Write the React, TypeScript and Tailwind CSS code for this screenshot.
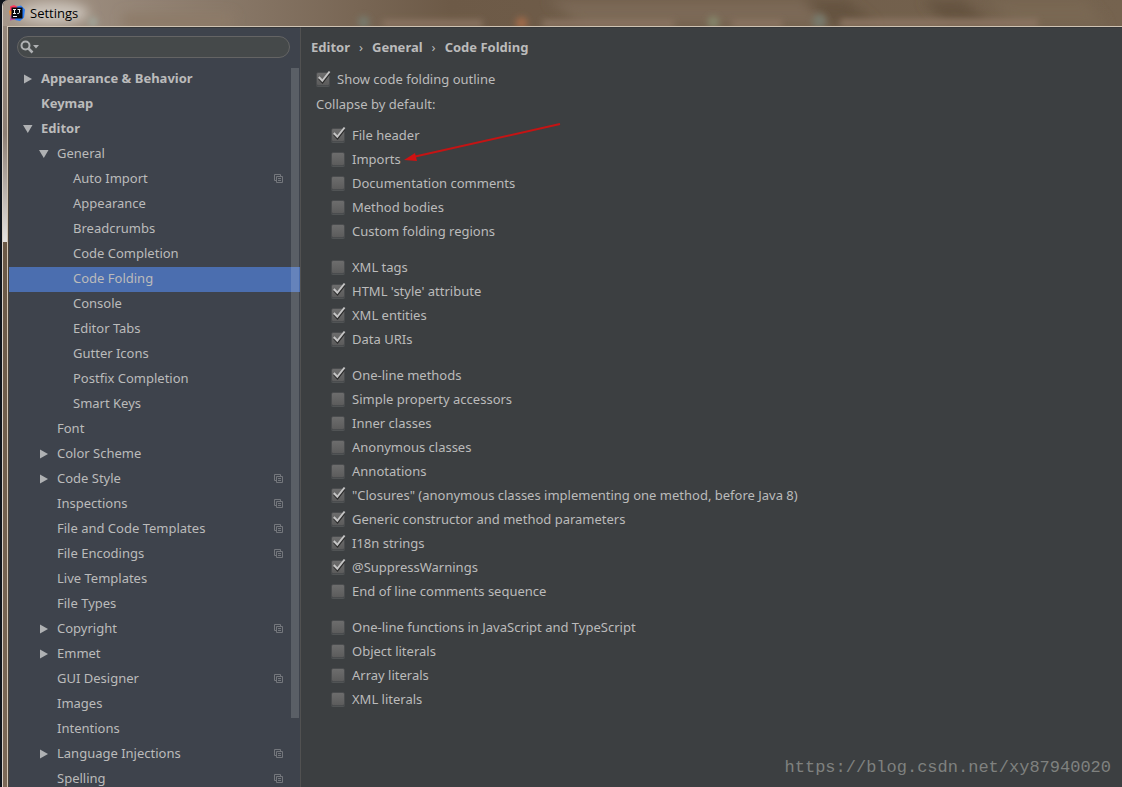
import { useId, useState } from "react";

type TreeItem = {
  label: string;
  depth: 0 | 1 | 2;
  arrow?: "right" | "down";
  bold?: boolean;
  copy?: boolean;
  selected?: boolean;
};

const tree: TreeItem[] = [
  { label: "Appearance & Behavior", depth: 0, arrow: "right", bold: true },
  { label: "Keymap", depth: 0, bold: true },
  { label: "Editor", depth: 0, arrow: "down", bold: true },
  { label: "General", depth: 1, arrow: "down" },
  { label: "Auto Import", depth: 2, copy: true },
  { label: "Appearance", depth: 2 },
  { label: "Breadcrumbs", depth: 2 },
  { label: "Code Completion", depth: 2 },
  { label: "Code Folding", depth: 2, selected: true },
  { label: "Console", depth: 2 },
  { label: "Editor Tabs", depth: 2 },
  { label: "Gutter Icons", depth: 2 },
  { label: "Postfix Completion", depth: 2 },
  { label: "Smart Keys", depth: 2 },
  { label: "Font", depth: 1 },
  { label: "Color Scheme", depth: 1, arrow: "right" },
  { label: "Code Style", depth: 1, arrow: "right", copy: true },
  { label: "Inspections", depth: 1, copy: true },
  { label: "File and Code Templates", depth: 1, copy: true },
  { label: "File Encodings", depth: 1, copy: true },
  { label: "Live Templates", depth: 1 },
  { label: "File Types", depth: 1 },
  { label: "Copyright", depth: 1, arrow: "right", copy: true },
  { label: "Emmet", depth: 1, arrow: "right" },
  { label: "GUI Designer", depth: 1, copy: true },
  { label: "Images", depth: 1 },
  { label: "Intentions", depth: 1 },
  { label: "Language Injections", depth: 1, arrow: "right", copy: true },
  { label: "Spelling", depth: 1, copy: true },
];

type Option = { label: string; checked?: boolean; marked?: boolean };

const groups: Option[][] = [
  [
    { label: "File header", checked: true },
    { label: "Imports", marked: true },
    { label: "Documentation comments" },
    { label: "Method bodies" },
    { label: "Custom folding regions" },
  ],
  [
    { label: "XML tags" },
    { label: "HTML 'style' attribute", checked: true },
    { label: "XML entities", checked: true },
    { label: "Data URIs", checked: true },
  ],
  [
    { label: "One-line methods", checked: true },
    { label: "Simple property accessors" },
    { label: "Inner classes" },
    { label: "Anonymous classes" },
    { label: "Annotations" },
    { label: '"Closures" (anonymous classes implementing one method, before Java 8)', checked: true },
    { label: "Generic constructor and method parameters", checked: true },
    { label: "I18n strings", checked: true },
    { label: "@SuppressWarnings", checked: true },
    { label: "End of line comments sequence" },
  ],
  [
    { label: "One-line functions in JavaScript and TypeScript" },
    { label: "Object literals" },
    { label: "Array literals" },
    { label: "XML literals" },
  ],
];

const depthPadding = ["pl-[14px]", "pl-[30px]", "pl-[46px]"];

function AppLogo() {
  return (
    <svg className="size-4 shrink-0" viewBox="0 0 16 16" aria-hidden="true">
      <path d="M1 1.5 5 0l4 2-3 7-5-1z" fill="#fb3a5e" />
      <path d="M0 5.500 3 6v4l-2 1z" fill="#f78a2a" />
      <path d="M8 1.500 12 .5l4 4-1 8-4 3.500-5-1z" fill="#2a7df5" />
      <path d="M1 15.500 2 9l6 3-2 2.500z" fill="#b3479c" />
      <rect x="2.500" y="2.500" width="11" height="11" fill="#07080c" />
      <path d="M4 4.500h3M5.500 4.500v4M4 8.500h3M8.500 4.500h3M10.500 4.500v3.200q0 .9-2.200 .8M4 11.500h4" fill="none" stroke="#f4f4f4" strokeWidth="1" />
    </svg>
  );
}

function Arrow({ dir }: { dir?: "right" | "down" }) {
  return (
    <svg className="size-[10px] shrink-0" viewBox="0 0 10 10" aria-hidden="true">
      {dir === "right" && <path d="M1 .5 9 5 1 9.500z" fill="#afb1b3" />}
      {dir === "down" && <path d="M0 1h9.500L4.800 9z" fill="#afb1b3" />}
    </svg>
  );
}

function CopyIcon() {
  return (
    <svg className="size-[9px] shrink-0" viewBox="0 0 9 9" fill="none" stroke="#74777c" aria-hidden="true">
      <path d="M2 6.500H.5V.5h6V2" />
      <path d="M2.500 2.500h6v6h-6zM4 4.500h3M4 6.500h3" />
    </svg>
  );
}

function Check({ option }: { option: Option }) {
  const id = useId();
  const [on, setOn] = useState(Boolean(option.checked));
  return (
    <div className="flex h-6 items-center gap-[7px]">
      <span className="relative size-[14px] shrink-0">
        <input
          id={id}
          type="checkbox"
          checked={on}
          onChange={(e) => setOn(e.target.checked)}
          className="block size-[14px] appearance-none rounded-[2px] border border-[#4a4c4e] bg-linear-to-b from-[#6d6d6d] to-[#5c5c5c] shadow-[0_1px_0_#515455]"
        />
        {on && (
          <svg className="pointer-events-none absolute -top-[2px] left-0 h-4 w-[15px]" viewBox="0 0 15 16" fill="none" aria-hidden="true">
            <path d="M3 8.500 6.500 12.500 13.500 3.500" stroke="#2b2b2b" strokeWidth="2" />
            <path d="M2.800 7 6.300 10.800 13.600 1.500" stroke="#c4c4c4" strokeWidth="2" />
          </svg>
        )}
      </span>
      <label htmlFor={id} className="relative whitespace-nowrap">
        {option.label}
        {option.marked && (
          <svg className="pointer-events-none absolute -top-[27px] left-full ml-[2px] h-10 w-40" viewBox="0 0 160 40" aria-hidden="true">
            <path d="M10 35 157 2" stroke="#c41414" strokeWidth="2" />
            <path d="M1 38 12 31 14 39z" fill="#d01212" />
          </svg>
        )}
      </label>
    </div>
  );
}

function TitleBar() {
  return (
    <header className="relative flex h-[26px] shrink-0 items-center gap-[5px] overflow-hidden bg-linear-to-r from-[#a5978a] via-[#6d5a47] via-40% to-[#75634f] pl-[6px]">
      <div className="absolute inset-0" aria-hidden="true">
        <svg className="h-full w-full" viewBox="0 0 1120 26" preserveAspectRatio="none">
          <defs>
            <filter id="haze" x="-30%" y="-100%" width="160%" height="300%">
              <feGaussianBlur stdDeviation="6" />
            </filter>
            <filter id="soft" x="-50%" y="-80%" width="200%" height="260%">
              <feGaussianBlur stdDeviation="3" />
            </filter>
          </defs>
          <g filter="url(#haze)">
            <path d="M545 0h255l55 26H580z" fill="#7b6957" />
            <path d="M800 0h45l30 26h-45zM920 0h40l30 26h-45z" fill="#655240" />
            <path d="M985 0h100l20 26h-90z" fill="#796753" />
            <path d="M120 14h110v14H120z" fill="#8d7a68" />
            <ellipse cx="50" cy="13" rx="36" ry="11" fill="#cbc3ba" />
          </g>
          <g filter="url(#soft)">
            <path d="M380 20h100v7H380zM540 20h132v7H540zM730 20h50v7h-50zM838 19h198v8H838z" fill="#8b7462" />
            <circle cx="361" cy="22" r="6" fill="#77796c" />
            <circle cx="519" cy="23" r="6" fill="#a06a48" />
            <circle cx="711" cy="22" r="6" fill="#84856b" />
            <circle cx="817" cy="21" r="7" fill="#77796c" />
            <circle cx="90" cy="22" r="5" fill="#a1a59a" />
          </g>
        </svg>
      </div>
      <span className="relative">
        <AppLogo />
      </span>
      <h1 className="relative font-['Open_Sans',sans-serif] text-[13px] text-black">Settings</h1>
    </header>
  );
}

export default function App() {
  return (
    <div className="flex h-screen overflow-hidden bg-[#10151c] pl-[2px] font-['Noto_Sans',sans-serif] text-[13px] leading-5 text-[#bbbbbb]">
      <div className="flex min-w-0 flex-1 flex-col overflow-hidden rounded-tl-[6px] border-l border-[#d9d0c7]">
        <TitleBar />
        <div className="flex min-h-0 flex-1 bg-[#6f5d4b]">
          <div className="flex w-1 shrink-0 flex-col" aria-hidden="true">
            <div className="h-[216px] bg-linear-to-b from-[#94867a] via-[#8d7f74] to-[#e4e2e0]" />
            <div className="flex-1 bg-linear-to-b from-[#6a5846] to-[#7b6856]" />
          </div>
          <div className="flex min-w-0 flex-1 border-t border-l border-[#d0c4b4]">
            <aside className="relative flex w-[293px] shrink-0 flex-col overflow-hidden border-t border-r border-l border-t-[#35373a] border-r-[#515151] border-l-[#4b4238] bg-[#3e434c]">
              <div className="px-2 pt-2">
                <div className="flex h-[22px] w-[273px] items-center gap-1 rounded-full border border-[#646464] bg-[#45494a] pr-3 pl-[2px]">
                  <svg className="h-[14px] w-5 shrink-0" viewBox="0 0 20 14" fill="none" aria-hidden="true">
                    <circle cx="5.500" cy="5.500" r="4" stroke="#afb1b3" strokeWidth="2" />
                    <path d="M8.500 8.500 12.500 12.500" stroke="#afb1b3" strokeWidth="2.500" />
                    <path d="M13 5h6l-3 3.500z" fill="#afb1b3" />
                  </svg>
                  <input type="search" aria-label="Search settings" className="min-w-0 flex-1 bg-transparent outline-none" />
                </div>
              </div>
              <nav className="mt-[9px] flex flex-col" aria-label="Settings categories">
                {tree.map((item) => (
                  <button
                    key={item.label}
                    type="button"
                    className={`flex h-[25px] shrink-0 items-center gap-2 pr-[17px] pb-[2px] text-left ${depthPadding[item.depth]} ${item.bold ? "font-bold" : ""} ${item.selected ? "bg-[#4b6eaf]" : ""}`}
                  >
                    <Arrow dir={item.arrow} />
                    <span className="flex-1 pb-[2px] whitespace-nowrap">{item.label}</span>
                    {item.copy && <CopyIcon />}
                  </button>
                ))}
              </nav>
              <div className="absolute top-10 right-[1px] h-[650px] w-2 bg-white/15" aria-hidden="true" />
            </aside>
            <main className="relative min-w-0 flex-1 border-t border-[#35373a] bg-[#3c3f41]">
              <nav className="flex items-center gap-[9px] pt-[9px] pl-[10px] font-bold" aria-label="Breadcrumb">
                <span>Editor</span>
                <span className="font-normal">›</span>
                <span>General</span>
                <span className="font-normal">›</span>
                <span>Code Folding</span>
              </nav>
              <section className="pt-[10px] pl-[15px]">
                <Check option={{ label: "Show code folding outline", checked: true }} />
                <p className="pt-[3px]">Collapse by default:</p>
                <div className="flex flex-col gap-3 pt-[9px] pl-[15px]">
                  {groups.map((group, i) => (
                    <div key={i} className="flex flex-col">
                      {group.map((option) => (
                        <Check key={option.label} option={option} />
                      ))}
                    </div>
                  ))}
                </div>
              </section>
              <p className="absolute right-[11px] bottom-[9px] font-['Liberation_Mono',monospace] text-[17px] text-[#7f817f]">
                https://blog.csdn.net/xy87940020
              </p>
            </main>
          </div>
        </div>
      </div>
    </div>
  );
}
